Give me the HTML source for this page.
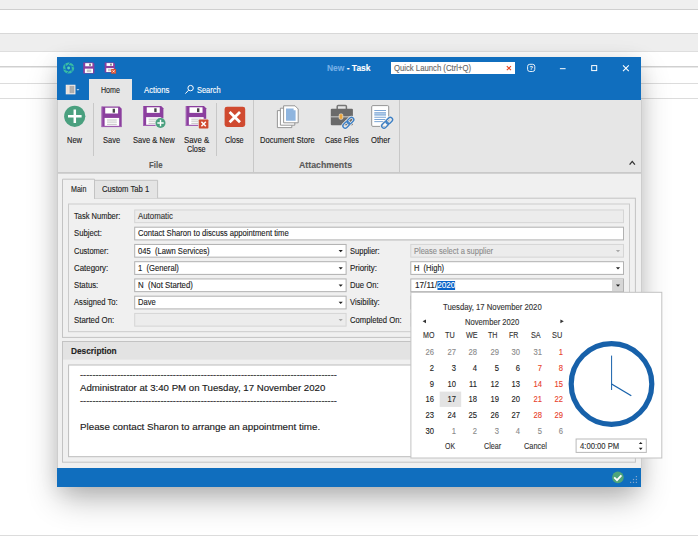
<!DOCTYPE html>
<html><head><meta charset="utf-8">
<style>
*{margin:0;padding:0;box-sizing:border-box}
html,body{width:698px;height:544px;overflow:hidden;background:#fff}
body{position:relative;font-family:"Liberation Sans",sans-serif;font-size:9px;color:#222}
.a{position:absolute}
.t{position:absolute;white-space:nowrap;line-height:12px;height:12px;-webkit-text-stroke:0.12px currentColor}
.bgl{position:absolute;left:0;width:698px;height:1px;background:#d4d4d4}
#win{position:absolute;left:57px;top:57px;width:584px;height:429.5px;background:#f0f0f0;box-shadow:0 14px 30px -3px rgba(0,0,0,.30),0 3px 18px rgba(0,0,0,.08)}
.fld{position:absolute;height:13.4px;border:1px solid #b0b0b0;background:#fff}
.fld.dis{background:#ececec;border-color:#d6d6d6}
.arr{position:absolute;width:0;height:0;border-left:2.1px solid transparent;border-right:2.1px solid transparent;border-top:2.3px solid #222}
.arr.g{border-top-color:#aaa}
svg{position:absolute;overflow:visible}
</style></head><body>
<!-- background app -->
<div class="a" style="left:0;top:0;width:698px;height:9px;background:#efefef"></div>
<div class="bgl" style="top:9px;background:#cfcfcf"></div>
<div class="bgl" style="top:33px;background:#d8d8d8"></div>
<div class="a" style="left:0;top:34px;width:698px;height:17px;background:#eeeeee"></div>
<div class="bgl" style="top:51px;background:#dedede"></div>
<div class="bgl" style="top:66px;background:#d0d0d0"></div>
<div class="bgl" style="top:67px;background:#e8e8e8"></div>
<div class="bgl" style="top:83px;background:#dcdcdc"></div>
<div class="bgl" style="top:98px;background:#dcdcdc"></div>
<div class="bgl" style="top:535px;background:#dcdcdc"></div>
<div id="win">
<div class="a" style="left:0;top:0;width:584px;height:43px;background:#106ebe"></div>
<div class="a" style="left:0;top:43px;width:584px;height:74px;background:#e6e6e6;border-bottom:1px solid #d2d2d2"></div><div class="a" style="left:0;top:115px;width:584px;height:1px;background:#c9c9c9"></div>
<div class="a" style="left:-0.5px;top:43px;width:1px;height:368px;background:#cdcdcd"></div><div class="a" style="left:583.5px;top:43px;width:1px;height:368px;background:#cdcdcd"></div>
<div class="a" style="left:32px;top:22px;width:43px;height:22px;background:#e6e6e6"></div>
<div class="t" id="home" style="left:43.5px;top:27px;font-size:8.4px;color:#222;font-weight:normal;transform:scaleX(0.8459);transform-origin:0 50%;">Home</div>
<div class="t" id="actions" style="left:87.3px;top:27px;font-size:8.4px;color:#fff;font-weight:normal;transform:scaleX(0.921);transform-origin:0 50%;">Actions</div>
<div class="t" id="search" style="left:140.4px;top:27px;font-size:8.4px;color:#fff;font-weight:normal;transform:scaleX(0.889);transform-origin:0 50%;">Search</div>
<div class="t" id="title" style="left:269.5px;top:5px;font-size:8.4px;font-weight:bold;color:#fff;transform:scaleX(1.008);transform-origin:0 50%"><span style="color:#74aee6">New</span> - Task</div>
<div class="a" style="left:333.7px;top:4.8px;width:124px;height:12.7px;background:#fff"></div>
<div class="t" id="ql" style="left:337px;top:5.1px;font-size:8.4px;color:#666;font-weight:normal;transform:scaleX(0.9216);transform-origin:0 50%;">Quick Launch (Ctrl+Q)</div>
<div class="t" id="r_new" style="left:10px;top:77.3px;font-size:8.4px;color:#222;font-weight:normal;transform:scaleX(0.8947);transform-origin:0 50%;">New</div>
<div class="t" id="r_save" style="left:45.6px;top:77.3px;font-size:8.4px;color:#222;font-weight:normal;transform:scaleX(0.8956);transform-origin:0 50%;">Save</div>
<div class="t" id="r_savenew" style="left:75.6px;top:77.3px;font-size:8.4px;color:#222;font-weight:normal;transform:scaleX(0.9025);transform-origin:0 50%;">Save &amp; New</div>
<div class="t" id="r_savecl1" style="left:127px;top:77.3px;font-size:8.4px;color:#222;font-weight:normal;transform:scaleX(0.9328);transform-origin:0 50%;">Save &amp;</div>
<div class="t" id="r_savecl2" style="left:130.2px;top:86.3px;font-size:8.4px;color:#222;font-weight:normal;transform:scaleX(0.8683);transform-origin:0 50%;">Close</div>
<div class="t" id="r_close" style="left:168px;top:77.3px;font-size:8.4px;color:#222;font-weight:normal;transform:scaleX(0.8683);transform-origin:0 50%;">Close</div>
<div class="t" id="r_doc" style="left:202.6px;top:77.3px;font-size:8.4px;color:#222;font-weight:normal;transform:scaleX(0.9022);transform-origin:0 50%;">Document Store</div>
<div class="t" id="r_case" style="left:268.2px;top:77.3px;font-size:8.4px;color:#222;font-weight:normal;transform:scaleX(0.8518);transform-origin:0 50%;">Case Files</div>
<div class="t" id="r_other" style="left:313.8px;top:77.3px;font-size:8.4px;color:#222;font-weight:normal;transform:scaleX(0.9068);transform-origin:0 50%;">Other</div>
<div class="t" id="g_file" style="left:91.5px;top:102px;font-size:8.4px;color:#5a5a5a;font-weight:bold;transform:scaleX(0.9351);transform-origin:0 50%;">File</div>
<div class="t" id="g_att" style="left:242.4px;top:102px;font-size:8.4px;color:#5a5a5a;font-weight:bold;transform:scaleX(1.0447);transform-origin:0 50%;">Attachments</div>
<div class="a" style="left:35.9px;top:46px;width:1px;height:53px;background:#c8c8c8"></div>
<div class="a" style="left:158.9px;top:46px;width:1px;height:53px;background:#c8c8c8"></div>
<div class="a" style="left:196.1px;top:43px;width:1px;height:72px;background:#c8c8c8"></div>
<div class="a" style="left:341.6px;top:43px;width:1px;height:72px;background:#c8c8c8"></div>
<svg style="left:0;top:0" width="584" height="429" viewBox="57 57 584 429" fill="none" stroke-width="1"><rect x="62.5" y="198.2" width="572.9" height="139.20" stroke="#c3c3c3" fill="#f0f0f0"/><path d="M94.5 198.2V180.3H157.6V198.2" stroke="#c3c3c3" fill="#e4e4e4"/><path d="M62.5 198.9V179.2H94.5V198.9" stroke="#c3c3c3" fill="#f0f0f0"/><rect x="68.5" y="204" width="561.0" height="127.70" stroke="#cbcbcb"/><rect x="62.5" y="341.5" width="572.9" height="120.70" stroke="#c3c3c3" fill="#f0f0f0"/><rect x="63" y="342" width="572" height="17.6" fill="#e3e3e3"/><rect x="68.6" y="365" width="560.9" height="91.70" stroke="#bcbcbc" fill="#fff"/></svg>
<div class="t" id="tab_main" style="left:13.6px;top:126px;font-size:8.4px;color:#222;font-weight:normal;transform:scaleX(0.8482);transform-origin:0 50%;">Main</div>
<div class="t" id="tab_custom" style="left:45.2px;top:126px;font-size:8.4px;color:#222;font-weight:normal;transform:scaleX(0.9159);transform-origin:0 50%;">Custom Tab 1</div>
<svg style="left:0;top:0" width="584" height="429" viewBox="57 57 584 429"><rect x="134.70" y="209.95" width="488.80" height="12.70" fill="#ececec" stroke="#d5d5d5" stroke-width="1"/><rect x="134.70" y="227.20" width="488.80" height="12.70" fill="#fff" stroke="#b1b1b1" stroke-width="1"/><rect x="134.70" y="244.45" width="211.40" height="12.70" fill="#fff" stroke="#b1b1b1" stroke-width="1"/><path d="M338.60 250.00h4.2l-2.1 2.3z" fill="#222"/><rect x="134.70" y="261.70" width="211.40" height="12.70" fill="#fff" stroke="#b1b1b1" stroke-width="1"/><path d="M338.60 267.25h4.2l-2.1 2.3z" fill="#222"/><rect x="134.70" y="278.95" width="211.40" height="12.70" fill="#fff" stroke="#b1b1b1" stroke-width="1"/><path d="M338.60 284.50h4.2l-2.1 2.3z" fill="#222"/><rect x="134.70" y="296.20" width="211.40" height="12.70" fill="#fff" stroke="#b1b1b1" stroke-width="1"/><path d="M338.60 301.75h4.2l-2.1 2.3z" fill="#222"/><rect x="134.70" y="313.45" width="211.40" height="12.70" fill="#ececec" stroke="#d5d5d5" stroke-width="1"/><path d="M338.60 319.00h4.2l-2.1 2.3z" fill="#a8a8a8"/><rect x="410.80" y="244.45" width="212.70" height="12.70" fill="#ececec" stroke="#d5d5d5" stroke-width="1"/><path d="M615.90 250.00h4.2l-2.1 2.3z" fill="#a8a8a8"/><rect x="410.80" y="261.70" width="212.70" height="12.70" fill="#fff" stroke="#b1b1b1" stroke-width="1"/><path d="M615.90 267.25h4.2l-2.1 2.3z" fill="#222"/><rect x="410.80" y="278.95" width="212.70" height="12.70" fill="#fff" stroke="#b1b1b1" stroke-width="1"/><rect x="612" y="279.45" width="11" height="11.70" fill="#d6d6d6"/><path d="M615.90 284.50h4.2l-2.1 2.3z" fill="#222"/><rect x="410.80" y="296.20" width="212.70" height="12.70" fill="#fff" stroke="#b1b1b1" stroke-width="1"/><path d="M615.90 301.75h4.2l-2.1 2.3z" fill="#222"/><rect x="410.80" y="313.45" width="212.70" height="12.70" fill="#ececec" stroke="#d5d5d5" stroke-width="1"/><path d="M615.90 319.00h4.2l-2.1 2.3z" fill="#a8a8a8"/></svg>
<div class="t" id="l0" style="left:16.8px;top:153.3px;font-size:8.4px;color:#222;font-weight:normal;transform:scaleX(0.898);transform-origin:0 50%;">Task Number:</div>
<div class="t" id="v0" style="left:80.8px;top:153.3px;font-size:8.4px;color:#333;font-weight:normal;transform:scaleX(0.9369);transform-origin:0 50%;">Automatic</div>
<div class="t" id="l1" style="left:16.8px;top:170.4px;font-size:8.4px;color:#222;font-weight:normal;transform:scaleX(0.9218);transform-origin:0 50%;">Subject:</div>
<div class="t" id="v1" style="left:80.8px;top:170.4px;font-size:8.4px;color:#222;font-weight:normal;transform:scaleX(0.917);transform-origin:0 50%;">Contact Sharon to discuss appointment time</div>
<div class="t" id="l2" style="left:16.8px;top:187.8px;font-size:8.4px;color:#222;font-weight:normal;transform:scaleX(0.8954);transform-origin:0 50%;">Customer:</div>
<div class="t" id="v2" style="left:80.8px;top:187.8px;font-size:8.4px;color:#222;font-weight:normal;transform:scaleX(0.9101);transform-origin:0 50%;">045&nbsp; (Lawn Services)</div>
<div class="t" id="l3" style="left:16.8px;top:205.0px;font-size:8.4px;color:#222;font-weight:normal;transform:scaleX(0.9418);transform-origin:0 50%;">Category:</div>
<div class="t" id="v3" style="left:80.8px;top:205.0px;font-size:8.4px;color:#222;font-weight:normal;transform:scaleX(0.9152);transform-origin:0 50%;">1&nbsp; (General)</div>
<div class="t" id="l4" style="left:16.8px;top:222.3px;font-size:8.4px;color:#222;font-weight:normal;transform:scaleX(0.9318);transform-origin:0 50%;">Status:</div>
<div class="t" id="v4" style="left:80.8px;top:222.3px;font-size:8.4px;color:#222;font-weight:normal;transform:scaleX(0.936);transform-origin:0 50%;">N&nbsp; (Not Started)</div>
<div class="t" id="l5" style="left:16.8px;top:239.4px;font-size:8.4px;color:#222;font-weight:normal;transform:scaleX(0.9119);transform-origin:0 50%;">Assigned To:</div>
<div class="t" id="v5" style="left:80.8px;top:239.4px;font-size:8.4px;color:#222;font-weight:normal;transform:scaleX(0.9048);transform-origin:0 50%;">Dave</div>
<div class="t" id="l6" style="left:16.8px;top:256.8px;font-size:8.4px;color:#222;font-weight:normal;transform:scaleX(0.9386);transform-origin:0 50%;">Started On:</div>
<div class="t" id="rl0" style="left:292.7px;top:187.8px;font-size:8.4px;color:#222;font-weight:normal;transform:scaleX(0.8983);transform-origin:0 50%;">Supplier:</div>
<div class="t" id="rv0" style="left:357.2px;top:187.8px;font-size:8.4px;color:#8c8c8c;font-weight:normal;transform:scaleX(0.8943);transform-origin:0 50%;">Please select a supplier</div>
<div class="t" id="rl1" style="left:292.7px;top:205.0px;font-size:8.4px;color:#222;font-weight:normal;transform:scaleX(0.9475);transform-origin:0 50%;">Priority:</div>
<div class="t" id="rv1" style="left:357.2px;top:205.0px;font-size:8.4px;color:#222;font-weight:normal;transform:scaleX(0.8981);transform-origin:0 50%;">H&nbsp; (High)</div>
<div class="t" id="rl2" style="left:292.7px;top:222.3px;font-size:8.4px;color:#222;font-weight:normal;transform:scaleX(0.9166);transform-origin:0 50%;">Due On:</div>
<div class="t" id="rl3" style="left:292.7px;top:239.4px;font-size:8.4px;color:#222;font-weight:normal;transform:scaleX(0.9156);transform-origin:0 50%;">Visibility:</div>
<div class="t" id="rl4" style="left:292.7px;top:256.8px;font-size:8.4px;color:#222;font-weight:normal;transform:scaleX(0.9161);transform-origin:0 50%;">Completed On:</div>
<div class="t" id="due" style="left:357.8px;top:222.3px;font-size:8.4px;transform:scaleX(0.9779);transform-origin:0 50%">17/11/<span style="background:#0a64c8;color:#fff;display:inline-block;height:8.4px;line-height:8.4px;vertical-align:middle;margin-top:-1.2px">2020</span></div>
<div class="t" id="desc" style="left:14px;top:287.8px;font-size:8.4px;color:#222;font-weight:bold;transform:scaleX(0.9918);transform-origin:0 50%;">Description</div>
<div class="t" id="d1" style="left:22.5px;top:312.3px;font-size:9.65px;color:#333;font-weight:normal;transform:scaleX(0.9656);transform-origin:0 50%;-webkit-text-stroke:0.05px #333;">-----------------------------------------------------------------------------------</div>
<div class="t" id="d2" style="left:22.5px;top:324.9px;font-size:9.65px;color:#1a1a1a;font-weight:normal;transform:scaleX(1.0018);transform-origin:0 50%;-webkit-text-stroke:0.14px #1a1a1a;">Administrator at 3:40 PM on Tuesday, 17 November 2020</div>
<div class="t" id="d3" style="left:22.5px;top:338.1px;font-size:9.65px;color:#333;font-weight:normal;transform:scaleX(0.9656);transform-origin:0 50%;-webkit-text-stroke:0.05px #333;">-----------------------------------------------------------------------------------</div>
<div class="t" id="d4" style="left:22.5px;top:363.5px;font-size:9.65px;color:#1a1a1a;font-weight:normal;transform:scaleX(1.0179);transform-origin:0 50%;-webkit-text-stroke:0.14px #1a1a1a;">Please contact Sharon to arrange an appointment time.</div>
<div class="a" style="left:0;top:411px;width:584px;height:18.5px;background:#106ebe"></div>
<svg style="left:0;top:0" width="584" height="429" viewBox="57 57 584 429"><rect x="410.9" y="292.3" width="250.9" height="165.7" fill="#fff" stroke="#c2c2c2" stroke-width="1"/><rect x="439.7" y="391.6" width="21.5" height="15.3" fill="#e3e3e3"/><path d="M426 319.4v3.8l-3.4-1.9z" fill="#333"/><path d="M560.4 319.4v3.8l3.4-1.9z" fill="#333"/><circle cx="611.5" cy="384" r="40.3" fill="none" stroke="#1761aa" stroke-width="5.2"/><line x1="611.6" y1="355.6" x2="611.6" y2="390" stroke="#1761aa" stroke-width="1"/><line x1="611.6" y1="384" x2="631.3" y2="395.8" stroke="#1761aa" stroke-width="1.3"/><rect x="576.1" y="439" width="70.2" height="13.4" fill="#fff" stroke="#b9b9b9" stroke-width="1"/><path d="M638.8 444.1h3.8l-1.9-2.2z" fill="#222"/><path d="M638.8 447.7h3.8l-1.9 2.2z" fill="#222"/></svg>
<div class="t" id="p_date" style="left:386.3px;top:244px;font-size:8.4px;color:#333;font-weight:normal;transform:scaleX(0.9218);transform-origin:0 50%;">Tuesday, 17 November 2020</div>
<div class="t" id="p_month" style="left:408.2px;top:258.7px;font-size:8.4px;color:#333;font-weight:normal;transform:scaleX(0.9112);transform-origin:0 50%;">November 2020</div>
<div class="t" id="h0" style="left:365.6px;top:272px;font-size:8.4px;color:#333;font-weight:normal;transform:scaleX(0.8444);transform-origin:0 50%;">MO</div>
<div class="t" id="h1" style="left:387.5px;top:272px;font-size:8.4px;color:#333;font-weight:normal;transform:scaleX(0.8772);transform-origin:0 50%;">TU</div>
<div class="t" id="h2" style="left:408.7px;top:272px;font-size:8.4px;color:#333;font-weight:normal;transform:scaleX(0.8667);transform-origin:0 50%;">WE</div>
<div class="t" id="h3" style="left:430.9px;top:272px;font-size:8.4px;color:#333;font-weight:normal;transform:scaleX(0.8503);transform-origin:0 50%;">TH</div>
<div class="t" id="h4" style="left:451.6px;top:272px;font-size:8.4px;color:#333;font-weight:normal;transform:scaleX(0.8414);transform-origin:0 50%;">FR</div>
<div class="t" id="h5" style="left:473.5px;top:272px;font-size:8.4px;color:#333;font-weight:normal;transform:scaleX(0.867);transform-origin:0 50%;">SA</div>
<div class="t" id="h6" style="left:494.7px;top:272px;font-size:8.4px;color:#333;font-weight:normal;transform:scaleX(0.8762);transform-origin:0 50%;">SU</div>
<div class="t" id="c00" style="left:317px;width:60px;text-align:right;top:289px;font-size:8.4px;color:#8a8a8a;font-weight:normal;transform:scaleX(0.91);transform-origin:100% 50%;">26</div>
<div class="t" id="c01" style="left:338.8px;width:60px;text-align:right;top:289px;font-size:8.4px;color:#8a8a8a;font-weight:normal;transform:scaleX(0.91);transform-origin:100% 50%;">27</div>
<div class="t" id="c02" style="left:360px;width:60px;text-align:right;top:289px;font-size:8.4px;color:#8a8a8a;font-weight:normal;transform:scaleX(0.91);transform-origin:100% 50%;">28</div>
<div class="t" id="c03" style="left:381.6px;width:60px;text-align:right;top:289px;font-size:8.4px;color:#8a8a8a;font-weight:normal;transform:scaleX(0.91);transform-origin:100% 50%;">29</div>
<div class="t" id="c04" style="left:403px;width:60px;text-align:right;top:289px;font-size:8.4px;color:#8a8a8a;font-weight:normal;transform:scaleX(0.91);transform-origin:100% 50%;">30</div>
<div class="t" id="c05" style="left:424.5px;width:60px;text-align:right;top:289px;font-size:8.4px;color:#8a8a8a;font-weight:normal;transform:scaleX(0.91);transform-origin:100% 50%;">31</div>
<div class="t" id="c06" style="left:445.7px;width:60px;text-align:right;top:289px;font-size:8.4px;color:#e8412a;font-weight:normal;transform:scaleX(0.91);transform-origin:100% 50%;">1</div>
<div class="t" id="c10" style="left:317px;width:60px;text-align:right;top:305px;font-size:8.4px;color:#222;font-weight:normal;transform:scaleX(0.91);transform-origin:100% 50%;">2</div>
<div class="t" id="c11" style="left:338.8px;width:60px;text-align:right;top:305px;font-size:8.4px;color:#222;font-weight:normal;transform:scaleX(0.91);transform-origin:100% 50%;">3</div>
<div class="t" id="c12" style="left:360px;width:60px;text-align:right;top:305px;font-size:8.4px;color:#222;font-weight:normal;transform:scaleX(0.91);transform-origin:100% 50%;">4</div>
<div class="t" id="c13" style="left:381.6px;width:60px;text-align:right;top:305px;font-size:8.4px;color:#222;font-weight:normal;transform:scaleX(0.91);transform-origin:100% 50%;">5</div>
<div class="t" id="c14" style="left:403px;width:60px;text-align:right;top:305px;font-size:8.4px;color:#222;font-weight:normal;transform:scaleX(0.91);transform-origin:100% 50%;">6</div>
<div class="t" id="c15" style="left:424.5px;width:60px;text-align:right;top:305px;font-size:8.4px;color:#e8412a;font-weight:normal;transform:scaleX(0.91);transform-origin:100% 50%;">7</div>
<div class="t" id="c16" style="left:445.7px;width:60px;text-align:right;top:305px;font-size:8.4px;color:#e8412a;font-weight:normal;transform:scaleX(0.91);transform-origin:100% 50%;">8</div>
<div class="t" id="c20" style="left:317px;width:60px;text-align:right;top:320.5px;font-size:8.4px;color:#222;font-weight:normal;transform:scaleX(0.91);transform-origin:100% 50%;">9</div>
<div class="t" id="c21" style="left:338.8px;width:60px;text-align:right;top:320.5px;font-size:8.4px;color:#222;font-weight:normal;transform:scaleX(0.91);transform-origin:100% 50%;">10</div>
<div class="t" id="c22" style="left:360px;width:60px;text-align:right;top:320.5px;font-size:8.4px;color:#222;font-weight:normal;transform:scaleX(0.91);transform-origin:100% 50%;">11</div>
<div class="t" id="c23" style="left:381.6px;width:60px;text-align:right;top:320.5px;font-size:8.4px;color:#222;font-weight:normal;transform:scaleX(0.91);transform-origin:100% 50%;">12</div>
<div class="t" id="c24" style="left:403px;width:60px;text-align:right;top:320.5px;font-size:8.4px;color:#222;font-weight:normal;transform:scaleX(0.91);transform-origin:100% 50%;">13</div>
<div class="t" id="c25" style="left:424.5px;width:60px;text-align:right;top:320.5px;font-size:8.4px;color:#e8412a;font-weight:normal;transform:scaleX(0.91);transform-origin:100% 50%;">14</div>
<div class="t" id="c26" style="left:445.7px;width:60px;text-align:right;top:320.5px;font-size:8.4px;color:#e8412a;font-weight:normal;transform:scaleX(0.91);transform-origin:100% 50%;">15</div>
<div class="t" id="c30" style="left:317px;width:60px;text-align:right;top:336.3px;font-size:8.4px;color:#222;font-weight:normal;transform:scaleX(0.91);transform-origin:100% 50%;">16</div>
<div class="t" id="c31" style="left:338.8px;width:60px;text-align:right;top:336.3px;font-size:8.4px;color:#222;font-weight:normal;transform:scaleX(0.91);transform-origin:100% 50%;">17</div>
<div class="t" id="c32" style="left:360px;width:60px;text-align:right;top:336.3px;font-size:8.4px;color:#222;font-weight:normal;transform:scaleX(0.91);transform-origin:100% 50%;">18</div>
<div class="t" id="c33" style="left:381.6px;width:60px;text-align:right;top:336.3px;font-size:8.4px;color:#222;font-weight:normal;transform:scaleX(0.91);transform-origin:100% 50%;">19</div>
<div class="t" id="c34" style="left:403px;width:60px;text-align:right;top:336.3px;font-size:8.4px;color:#222;font-weight:normal;transform:scaleX(0.91);transform-origin:100% 50%;">20</div>
<div class="t" id="c35" style="left:424.5px;width:60px;text-align:right;top:336.3px;font-size:8.4px;color:#e8412a;font-weight:normal;transform:scaleX(0.91);transform-origin:100% 50%;">21</div>
<div class="t" id="c36" style="left:445.7px;width:60px;text-align:right;top:336.3px;font-size:8.4px;color:#e8412a;font-weight:normal;transform:scaleX(0.91);transform-origin:100% 50%;">22</div>
<div class="t" id="c40" style="left:317px;width:60px;text-align:right;top:352.2px;font-size:8.4px;color:#222;font-weight:normal;transform:scaleX(0.91);transform-origin:100% 50%;">23</div>
<div class="t" id="c41" style="left:338.8px;width:60px;text-align:right;top:352.2px;font-size:8.4px;color:#222;font-weight:normal;transform:scaleX(0.91);transform-origin:100% 50%;">24</div>
<div class="t" id="c42" style="left:360px;width:60px;text-align:right;top:352.2px;font-size:8.4px;color:#222;font-weight:normal;transform:scaleX(0.91);transform-origin:100% 50%;">25</div>
<div class="t" id="c43" style="left:381.6px;width:60px;text-align:right;top:352.2px;font-size:8.4px;color:#222;font-weight:normal;transform:scaleX(0.91);transform-origin:100% 50%;">26</div>
<div class="t" id="c44" style="left:403px;width:60px;text-align:right;top:352.2px;font-size:8.4px;color:#222;font-weight:normal;transform:scaleX(0.91);transform-origin:100% 50%;">27</div>
<div class="t" id="c45" style="left:424.5px;width:60px;text-align:right;top:352.2px;font-size:8.4px;color:#e8412a;font-weight:normal;transform:scaleX(0.91);transform-origin:100% 50%;">28</div>
<div class="t" id="c46" style="left:445.7px;width:60px;text-align:right;top:352.2px;font-size:8.4px;color:#e8412a;font-weight:normal;transform:scaleX(0.91);transform-origin:100% 50%;">29</div>
<div class="t" id="c50" style="left:317px;width:60px;text-align:right;top:368.2px;font-size:8.4px;color:#222;font-weight:normal;transform:scaleX(0.91);transform-origin:100% 50%;">30</div>
<div class="t" id="c51" style="left:338.8px;width:60px;text-align:right;top:368.2px;font-size:8.4px;color:#8a8a8a;font-weight:normal;transform:scaleX(0.91);transform-origin:100% 50%;">1</div>
<div class="t" id="c52" style="left:360px;width:60px;text-align:right;top:368.2px;font-size:8.4px;color:#8a8a8a;font-weight:normal;transform:scaleX(0.91);transform-origin:100% 50%;">2</div>
<div class="t" id="c53" style="left:381.6px;width:60px;text-align:right;top:368.2px;font-size:8.4px;color:#8a8a8a;font-weight:normal;transform:scaleX(0.91);transform-origin:100% 50%;">3</div>
<div class="t" id="c54" style="left:403px;width:60px;text-align:right;top:368.2px;font-size:8.4px;color:#8a8a8a;font-weight:normal;transform:scaleX(0.91);transform-origin:100% 50%;">4</div>
<div class="t" id="c55" style="left:424.5px;width:60px;text-align:right;top:368.2px;font-size:8.4px;color:#8a8a8a;font-weight:normal;transform:scaleX(0.91);transform-origin:100% 50%;">5</div>
<div class="t" id="c56" style="left:445.7px;width:60px;text-align:right;top:368.2px;font-size:8.4px;color:#8a8a8a;font-weight:normal;transform:scaleX(0.91);transform-origin:100% 50%;">6</div>
<div class="t" id="b_ok" style="left:388px;top:382.8px;font-size:8.4px;color:#333;font-weight:normal;transform:scaleX(0.8258);transform-origin:0 50%;">OK</div>
<div class="t" id="b_clear" style="left:426.5px;top:382.8px;font-size:8.4px;color:#333;font-weight:normal;transform:scaleX(0.8543);transform-origin:0 50%;">Clear</div>
<div class="t" id="b_cancel" style="left:467.4px;top:382.8px;font-size:8.4px;color:#333;font-weight:normal;transform:scaleX(0.8781);transform-origin:0 50%;">Cancel</div>
<div class="t" id="p_time" style="left:522.9px;top:383px;font-size:8.4px;color:#333;font-weight:normal;transform:scaleX(0.915);transform-origin:0 50%;">4:00:00 PM</div>
<svg style="left:0;top:0" width="584" height="429" viewBox="57 57 584 429">
<circle cx="68.6" cy="68.0" r="4.35" fill="none" stroke="#38bda4" stroke-width="2.5"/><g stroke="#106ebe" stroke-width="0.8" stroke-linecap="butt"><path d="M71.46 68.50L72.29 72.73"/><path d="M69.59 70.73L66.35 73.56"/><path d="M66.74 70.22L62.66 68.84"/><path d="M65.74 67.50L64.91 63.27"/><path d="M67.61 65.27L70.85 62.44"/><path d="M70.46 65.78L74.54 67.16"/></g><circle cx="68.6" cy="68.0" r="1.45" fill="#52d3ba"/>
<path d="M83.2 62.5H93.168L94.4 63.732V73.6H83.2Z" fill="#8b3f9e"/><rect x="85.22" y="63.17" width="7.17" height="3.11" fill="#fff"/><rect x="89.36" y="63.72" width="1.29" height="2.11" fill="#444"/><rect x="84.88" y="68.66" width="8.12" height="4.27" fill="#fff"/><rect x="86.78" y="69.55" width="4.47" height="2.56" fill="#c8c8c8"/>
<path d="M104.7 62.5H113.867L115.0 63.633V72.6H104.7Z" fill="#8b3f9e"/><rect x="106.55" y="63.11" width="6.59" height="2.83" fill="#fff"/><rect x="110.37" y="63.61" width="1.18" height="1.92" fill="#444"/><rect x="106.25" y="68.11" width="7.47" height="3.89" fill="#fff"/><rect x="108.00" y="68.91" width="4.11" height="2.33" fill="#c8c8c8"/>
<rect x="111.2" y="69" width="4.9" height="4.7" fill="#d9502f"/><path d="M112.6 70.3l2.1 2.1m0-2.1l-2.1 2.1" stroke="#fff" stroke-width="0.8" fill="none"/>
<rect x="66.3" y="85.3" width="8.6" height="8.5" fill="#b6b6b6" stroke="#f8eee6" stroke-width="1.1"/><rect x="66.8" y="85.8" width="2.6" height="7.5" fill="#f8eee6"/><rect x="67.6" y="86" width="0.7" height="7" fill="#d8c8bc"/><path d="M70.6 86v7M72 86v7M73.4 86v7" stroke="#a4a4a4" stroke-width="0.6"/>
<path d="M76.5 89.0h2.9l-1.45 1.7z" fill="#b4d2ee"/>
<g fill="none" stroke="#fff" stroke-width="1"><circle cx="190.6" cy="88.1" r="2.7"/><path d="M188.6 90.2l-3.2 3.4"/></g>
<path d="M506.8 66.2l4.2 3.9m0-3.9l-4.2 3.9" stroke="#e8411c" stroke-width="1.1" fill="none"/>
<rect x="527.6" y="64.3" width="7.2" height="7.2" rx="2.2" fill="none" stroke="#fff" stroke-width="0.9"/><text x="531.2" y="70.2" font-family="Liberation Sans, sans-serif" font-size="5.6" font-weight="bold" fill="#fff" text-anchor="middle">?</text>
<path d="M559.9 68.7h5.7" stroke="#fff" stroke-width="1"/><rect x="591.7" y="65.6" width="5" height="5" fill="none" stroke="#fff" stroke-width="1"/><path d="M623 65.4l5.8 5.7m0-5.7l-5.8 5.7" stroke="#fff" stroke-width="1.1" fill="none"/>
<circle cx="74.75" cy="116.3" r="10.6" fill="#4aa07f"/><path d="M68 116.3h13.6M74.8 109.5v13.6" stroke="#fff" stroke-width="2.5"/>
<path d="M101.6 106.5H119.48899999999999L121.69999999999999 108.711V127.1H101.6Z" fill="#8b3f9e"/><rect x="101.6" y="106.5" width="0.9" height="20.6" fill="#a868b8"/><rect x="101.6" y="126.3" width="20.1" height="0.8" fill="#a868b8"/><rect x="105.22" y="107.74" width="12.86" height="5.77" fill="#fff"/><rect x="112.66" y="108.77" width="2.31" height="3.91" fill="#444"/><rect x="104.61" y="117.93" width="14.57" height="7.93" fill="#fff"/><rect x="107.03" y="119.60" width="9.76" height="0.8" fill="#b5b5b5"/><rect x="107.03" y="121.66" width="9.76" height="0.8" fill="#b5b5b5"/><rect x="107.03" y="123.88" width="9.76" height="0.8" fill="#b5b5b5"/>
<path d="M143.1 106.1H161.167L163.4 108.333V126.0H143.1Z" fill="#8b3f9e"/><rect x="143.1" y="106.1" width="0.9" height="19.9" fill="#a868b8"/><rect x="143.1" y="125.2" width="20.3" height="0.8" fill="#a868b8"/><rect x="146.75" y="107.29" width="12.99" height="5.57" fill="#fff"/><rect x="154.26" y="108.29" width="2.33" height="3.78" fill="#444"/><rect x="146.14" y="117.14" width="14.72" height="7.66" fill="#fff"/><rect x="148.58" y="118.74" width="9.86" height="0.8" fill="#b5b5b5"/><rect x="148.58" y="120.73" width="9.86" height="0.8" fill="#b5b5b5"/><rect x="148.58" y="122.87" width="9.86" height="0.8" fill="#b5b5b5"/>
<circle cx="160.5" cy="123" r="5.6" fill="#e6e6e6"/><circle cx="160.5" cy="123" r="5" fill="#4aa07f"/><path d="M157.3 123h6.4M160.5 119.8v6.4" stroke="#fff" stroke-width="1.4"/>
<path d="M185.8 106.1H203.95600000000002L206.20000000000002 108.344V126.0H185.8Z" fill="#8b3f9e"/><rect x="185.8" y="106.1" width="0.9" height="19.9" fill="#a868b8"/><rect x="185.8" y="125.2" width="20.4" height="0.8" fill="#a868b8"/><rect x="189.47" y="107.29" width="13.06" height="5.57" fill="#fff"/><rect x="197.02" y="108.29" width="2.35" height="3.78" fill="#444"/><rect x="188.86" y="117.14" width="14.79" height="7.66" fill="#fff"/><rect x="191.31" y="118.74" width="9.91" height="0.8" fill="#b5b5b5"/><rect x="191.31" y="120.73" width="9.91" height="0.8" fill="#b5b5b5"/><rect x="191.31" y="122.87" width="9.91" height="0.8" fill="#b5b5b5"/>
<rect x="198.2" y="118.8" width="10.6" height="10.2" fill="#e6e6e6"/><rect x="198.8" y="119.4" width="9.6" height="9.2" rx="0.8" fill="#d04a30"/><path d="M201.4 121.8l4.4 4.4m0-4.4l-4.4 4.4" stroke="#fff" stroke-width="1.5" fill="none"/>
<rect x="224.6" y="106.7" width="20.6" height="20.3" rx="2.4" fill="#d04a30"/><path d="M229.6 112l10.4 10.2m0-10.2l-10.4 10.2" stroke="#fff" stroke-width="2.8" fill="none"/>
<path d="M277.4 110.6H288.59999999999997L291.79999999999995 113.8V127.6H277.4Z" fill="#fff" stroke="#8c8c8c" stroke-width="0.9" stroke-linejoin="round"/><path d="M280.4 108.2H291.59999999999997L294.79999999999995 111.4V125.2H280.4Z" fill="#fff" stroke="#8c8c8c" stroke-width="0.9" stroke-linejoin="round"/><path d="M283.6 105.8H295.00000000000006L298.20000000000005 109.0V122.8H283.6Z" fill="#fff" stroke="#8c8c8c" stroke-width="0.9" stroke-linejoin="round"/><path d="M286.0 108.6H293.6000000000001V110.2H295.6V120.8H286.0Z" fill="#8fb5df"/>
<path d="M337.2 109v-2.4q0-1 1-1h7.2q1 0 1 1v2.4" fill="none" stroke="#777" stroke-width="1.5"/><rect x="330.8" y="108.8" width="22.1" height="16.5" rx="1" fill="#6a6a6a"/><rect x="330.8" y="116.4" width="22.1" height="0.9" fill="#d8d8d8"/><rect x="339.2" y="113.9" width="3.6" height="5.4" rx="1.2" fill="#eba53c" stroke="#f3e6d0" stroke-width="0.7"/>
<g fill="none" stroke="#ececec" stroke-width="2.9"><rect x="-3.7" y="-2.3" width="7.4" height="4.6" rx="2.3" transform="translate(350.5 120.6) rotate(-45)"/><rect x="-3.7" y="-2.3" width="7.4" height="4.6" rx="2.3" transform="translate(346.2 124.8) rotate(-45)"/></g><g fill="none" stroke="#3f80c4" stroke-width="1.4"><rect x="-3.7" y="-2.3" width="7.4" height="4.6" rx="2.3" transform="translate(350.5 120.6) rotate(-45)"/><rect x="-3.7" y="-2.3" width="7.4" height="4.6" rx="2.3" transform="translate(346.2 124.8) rotate(-45)"/></g>
<rect x="371.7" y="105.6" width="17" height="20.8" rx="1.2" fill="#fff" stroke="#8a8a8a" stroke-width="0.9"/><rect x="374.3" y="112.8" width="11.7" height="2.4" fill="#c5d9ee"/><rect x="374.3" y="110.1" width="11.7" height="0.8" fill="#5b8fcb"/><rect x="374.3" y="112.39999999999999" width="11.7" height="0.8" fill="#5b8fcb"/><rect x="374.3" y="114.6" width="11.7" height="0.8" fill="#5b8fcb"/><rect x="374.3" y="116.8" width="11.7" height="0.8" fill="#5b8fcb"/><rect x="374.3" y="119.19999999999999" width="11.7" height="0.8" fill="#5b8fcb"/><rect x="374.3" y="121.3" width="11.7" height="0.8" fill="#5b8fcb"/>
<g fill="none" stroke="#ececec" stroke-width="2.9"><rect x="-3.7" y="-2.3" width="7.4" height="4.6" rx="2.3" transform="translate(389.3 120.6) rotate(-45)"/><rect x="-3.7" y="-2.3" width="7.4" height="4.6" rx="2.3" transform="translate(385.0 124.8) rotate(-45)"/></g><g fill="none" stroke="#3f80c4" stroke-width="1.4"><rect x="-3.7" y="-2.3" width="7.4" height="4.6" rx="2.3" transform="translate(389.3 120.6) rotate(-45)"/><rect x="-3.7" y="-2.3" width="7.4" height="4.6" rx="2.3" transform="translate(385.0 124.8) rotate(-45)"/></g>
<path d="M629.6 164.6l2.65-3.2 2.65 3.2" fill="none" stroke="#333" stroke-width="1.3"/>
<circle cx="617.9" cy="477.4" r="5.8" fill="#4ea47a"/><path d="M614.2 477.3l2.8 2.8 4.4-4.8" fill="none" stroke="#fff" stroke-width="1.8"/>
<rect x="635.8" y="476.0" width="1.2" height="1.2" fill="#86a6cb"/><rect x="632.9" y="478.9" width="1.2" height="1.2" fill="#86a6cb"/><rect x="635.8" y="478.9" width="1.2" height="1.2" fill="#86a6cb"/><rect x="630.0" y="481.79999999999995" width="1.2" height="1.2" fill="#86a6cb"/><rect x="632.9" y="481.79999999999995" width="1.2" height="1.2" fill="#86a6cb"/><rect x="635.8" y="481.79999999999995" width="1.2" height="1.2" fill="#86a6cb"/>
</svg>

</div>
</body></html>
